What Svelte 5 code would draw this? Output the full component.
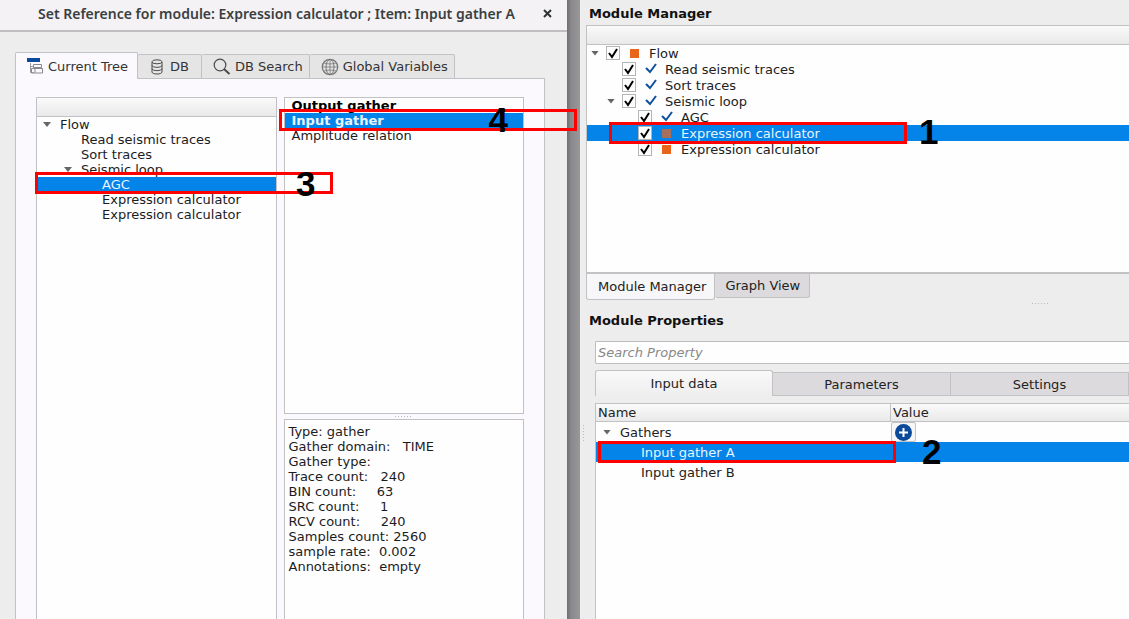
<script>
  let sourceTree = [
    { name: 'Flow', depth: 0, open: true },
    { name: 'Read seismic traces', depth: 1 },
    { name: 'Sort traces', depth: 1 },
    { name: 'Seismic loop', depth: 1, open: true },
    { name: 'AGC', depth: 2, step: '3' },
    { name: 'Expression calculator', depth: 2 },
    { name: 'Expression calculator', depth: 2 }
  ]
  let outputs = [
    { name: 'Output gather', bold: true },
    { name: 'Input gather', bold: true, step: '4' },
    { name: 'Amplitude relation' }
  ]
  let modules = [
    { name: 'Flow', depth: 0, open: true, on: true },
    { name: 'Read seismic traces', depth: 1, done: true, on: true },
    { name: 'Sort traces', depth: 1, done: true, on: true },
    { name: 'Seismic loop', depth: 1, done: true, open: true, on: true },
    { name: 'AGC', depth: 2, done: true, on: true },
    { name: 'Expression calculator', depth: 2, on: true, step: '1' },
    { name: 'Expression calculator', depth: 2, on: true }
  ]
  let details = [
    'Type: gather',
    'Gather domain:   TIME',
    'Gather type:',
    'Trace count:   240',
    'BIN count:     63',
    'SRC count:     1',
    'RCV count:     240',
    'Samples count: 2560',
    'sample rate:  0.002',
    'Annotations:  empty'
  ].join('\n')

  let pickedSource = 4
  let pickedOutput = 1
  let pickedModule = 5
  let search = ''
</script>

<main>
  <section class="dialog">
    <header class="title">
      <h1>Set Reference for module: Expression calculator ; Item: Input gather A</h1>
      <button class="close" aria-label="Close">
        <svg width="9" height="9" viewBox="0 0 9 9"><path d="M1 1 8 8M8 1 1 8" stroke="#2e3436" stroke-width="2" /></svg>
      </button>
    </header>

    <div class="dialog-body">
      <nav class="tabs">
        <button class="tab current">
          <svg width="18" height="18" viewBox="0 0 18 18" fill="none">
            <path d="M0 1h13v4H0z" fill="#0b4a9b" />
            <path d="M3.500 6v9.500h3M3.500 9.500h3" stroke="#999" />
            <path d="M6.500 7.500h8v3h-8zM4.500 11.500h11v4.500h-11zM8 11.500v4" stroke="#888" />
          </svg>
          Current Tree
        </button>
        <button class="tab db">
          <svg width="12" height="16" viewBox="0 0 12 16" fill="none" stroke="#4a4a4a">
            <ellipse cx="6" cy="2.800" rx="5" ry="2" />
            <path d="M1 3v10c0 2.700 10 2.700 10 0V3M1 6.300c0 2.700 10 2.700 10 0M1 9.600c0 2.700 10 2.700 10 0" />
          </svg>
          DB
        </button>
        <button class="tab">
          <svg width="18" height="18" viewBox="0 0 18 18" fill="none" stroke="#4a4a4a">
            <circle cx="7" cy="7" r="5.800" stroke-width="1.200" />
            <path d="m11 11 5.500 5" stroke-width="2" />
          </svg>
          DB Search
        </button>
        <button class="tab">
          <svg width="18" height="18" viewBox="0 0 18 18" fill="none" stroke="#777">
            <circle cx="9" cy="9" r="7.700" stroke-width="1.300" />
            <ellipse cx="9" cy="9" rx="4" ry="7.500" />
            <path d="M9 1.500v15M1.500 9h15M3 5c3 1.300 9 1.300 12 0M3 13c3-1.300 9-1.300 12 0" stroke-width=".8" />
          </svg>
          Global Variables
        </button>
      </nav>

      <div class="panel">
        <div class="source box">
          <div class="head"></div>
          <ul>
            {#each sourceTree as item, i}
              <li class:picked={i === pickedSource}>
                <button class="row depth{item.depth}" on:click={() => (pickedSource = i)}>
                  <span class="arrow" class:open={item.open}></span>
                  {item.name}
                </button>
                {#if item.step}
                  <span class="frame"></span><b class="step">{item.step}</b>
                {/if}
              </li>
            {/each}
          </ul>
        </div>

        <div class="side">
          <ul class="outputs box">
            {#each outputs as item, i}
              <li class:picked={i === pickedOutput}>
                <button class="row" class:bold={item.bold} on:click={() => (pickedOutput = i)}>{item.name}</button>
                {#if item.step}
                  <span class="frame"></span><b class="step">{item.step}</b>
                {/if}
              </li>
            {/each}
          </ul>
          <div class="grip"></div>
          <pre class="details box">{details}</pre>
        </div>
      </div>
    </div>
  </section>

  <div class="gutter"></div>

  <section class="workspace">
    <div class="grip vertical"></div>
    <div class="manager">
      <h2>Module Manager</h2>
      <div class="modules box">
        <div class="head"></div>
        <ul>
          {#each modules as item, i}
            <li class:picked={i === pickedModule}>
              <label class="row depth{item.depth}">
                <span class="arrow" class:open={item.open}></span>
                <span class="check">
                  <input type="checkbox" bind:checked={item.on} />
                  <svg width="14" height="14" viewBox="0 0 14 14"><path d="m3 7 3 4 5-8" fill="none" stroke="#000" stroke-width="2" /></svg>
                </span>
                <span class="state">
                  {#if item.done}
                    <svg width="12" height="12" viewBox="0 0 12 12"><path d="m1 5 4 4 6-8" fill="none" stroke="#0b4f9e" stroke-width="2" /></svg>
                  {:else}
                    <i></i>
                  {/if}
                </span>
                {item.name}
              </label>
              {#if item.step}
                <span class="frame"></span><b class="step">{item.step}</b>
              {/if}
            </li>
          {/each}
        </ul>
      </div>
      <nav class="bottom-tabs">
        <button class="current">Module Manager</button>
        <button>Graph View</button>
      </nav>
    </div>

    <div class="grip"></div>

    <div class="properties">
      <h2>Module Properties</h2>
      <input class="search" type="text" aria-label="Search Property" placeholder="Search Property" bind:value={search} />
      <nav class="wide-tabs">
        <button class="current">Input data</button>
        <button>Parameters</button>
        <button>Settings</button>
      </nav>
      <div class="values">
        <table>
          <thead>
            <tr><th>Name</th><th>Value</th></tr>
          </thead>
          <tbody>
            <tr>
              <td><div class="group"><span class="arrow open"></span>Gathers</div></td>
              <td>
                <button class="add" aria-label="Add gather">
                  <svg width="17" height="17" viewBox="0 0 17 17"><circle cx="8.500" cy="8.500" r="8.500" fill="#0b4a9b" /><path d="M8.500 4v9M4 8.500h9" stroke="#fff" stroke-width="2" /></svg>
                </button>
              </td>
            </tr>
            <tr class="picked">
              <td class="leaf">Input gather A<span class="frame"></span></td>
              <td><b class="step">2</b></td>
            </tr>
            <tr><td class="leaf">Input gather B</td><td></td></tr>
          </tbody>
        </table>
      </div>
    </div>
  </section>
</main>

<style>
  :global(body) {
    background: #ededed;
  }
  main {
    display: grid;
    grid-template-columns: minmax(0, 567fr) 13px minmax(0, 549fr);
    min-height: 100vh;
    overflow: hidden;
    font-family: 'DejaVu Sans', sans-serif;
    font-size: 13px;
    line-height: 15px;
    color: #1c1c1e;
    background: #ededed;
  }
  main * {
    box-sizing: border-box;
  }
  button,
  input {
    font: inherit;
    color: inherit;
    margin: 0;
  }
  ul {
    list-style: none;
    margin: 0;
    padding: 0;
  }
  h1,
  h2 {
    margin: 0;
  }
  .box {
    background: #fefefe;
    border: 1px solid #c2c1c3;
  }
  .head {
    height: 19px;
    background: linear-gradient(#fafafa, #e9e9e9);
    border-bottom: 1px solid #c2c1c3;
  }

  /* reference dialog */
  .dialog {
    display: flex;
    flex-direction: column;
    position: relative;
    z-index: 1;
  }
  .title {
    display: flex;
    align-items: center;
    height: 32px;
    padding: 0 15px 3px 38px;
    background: #f4f2f5;
    border-bottom: 2px solid #c0bfc0;
  }
  h1 {
    flex: 1;
    font-family: 'Noto Sans', sans-serif;
    font-size: 14px;
    font-weight: 600;
    line-height: 20px;
    white-space: nowrap;
    color: #3a3f42;
  }
  .close {
    display: flex;
    padding: 0;
    border: 0;
    background: none;
  }
  .dialog-body {
    flex: 1;
    display: flex;
    flex-direction: column;
    padding: 20px 22px 0 15px;
  }
  .tabs {
    display: flex;
    align-items: flex-end;
    height: 26px;
  }
  .tab {
    display: flex;
    align-items: center;
    gap: 4px;
    height: 24px;
    padding: 0 6px 0 11px;
    white-space: nowrap;
    color: #333;
    background: #e6e5e6;
    border: 1px solid #c2c1c3;
    border-left: 0;
    border-bottom: 0;
    border-radius: 2px 2px 0 0;
  }
  .tab.db {
    gap: 7px;
    padding: 0 12px 0 13px;
  }
  .tab.current {
    position: relative;
    height: 27px;
    margin-bottom: -1px;
    padding-right: 9px;
    gap: 3px;
    background: #fbf9fd;
    border-left: 1px solid #c2c1c3;
  }
  .panel {
    flex: 1;
    display: grid;
    grid-template-columns: 1fr 1fr;
    gap: 7px;
    padding: 18px 20px 0;
    background: #fbf9fd;
    border: 1px solid #c2c1c3;
    border-bottom: 0;
  }
  .source {
    border-bottom: 0;
  }
  .side {
    display: flex;
    flex-direction: column;
  }
  .outputs {
    flex: 0 0 317px;
  }
  .details {
    flex: 1;
    margin: 0;
    padding: 4px;
    font: inherit;
    border-bottom: 0;
  }

  /* rows shared by all the lists */
  li {
    position: relative;
  }
  .row {
    display: flex;
    align-items: center;
    width: 100%;
    height: 15px;
    padding: 0;
    border: 0;
    background: none;
    white-space: nowrap;
    text-align: left;
  }
  .outputs .row {
    padding-left: 7px;
  }
  .bold {
    font-weight: bold;
    color: #000;
  }
  .picked {
    background: #0483e8;
    color: #e9f4fd;
  }
  .picked .bold {
    color: #e9f4fd;
  }
  .arrow {
    width: 8px;
    height: 5px;
    flex: none;
  }
  .arrow.open {
    background: #666;
    clip-path: polygon(0 0, 100% 0, 50% 100%);
  }
  .source .row {
    gap: 9px;
    padding-left: 6px;
  }
  .source .depth1 {
    padding-left: 27px;
  }
  .source .depth2 {
    padding-left: 48px;
  }

  /* numbered steps over the windows */
  .frame {
    position: absolute;
    z-index: 2;
    left: -2px;
    top: -5px;
    width: 298px;
    height: 22px;
    border: 3px solid #f00;
    pointer-events: none;
  }
  .step {
    position: absolute;
    z-index: 3;
    left: 259px;
    top: -10px;
    font-family: 'Liberation Sans', Arial, sans-serif;
    font-size: 35px;
    font-weight: 700;
    line-height: 34px;
    color: #000;
    pointer-events: none;
  }
  .outputs .frame {
    left: -6px;
    top: -4px;
  }
  .outputs .step {
    left: 204px;
  }
  .modules .frame {
    left: 22px;
    top: -3px;
  }
  .modules .step {
    left: 332px;
  }

  .grip {
    height: 5px;
    width: 17px;
    margin: 0 auto;
    background: repeating-linear-gradient(90deg, #bbb 0 1px, transparent 1px 3px) center / 100% 1px no-repeat;
  }
  .gutter {
    background: linear-gradient(90deg, #6f6d70, #8a888b 30%, #989799);
  }

  /* module windows */
  .workspace {
    position: relative;
    display: flex;
    flex-direction: column;
    color: #222;
  }
  .grip.vertical {
    position: absolute;
    left: 3px;
    top: 425px;
    width: 1px;
    height: 17px;
    background: repeating-linear-gradient(#bbb 0 1px, transparent 1px 3px);
  }
  .workspace > .grip:not(.vertical) {
    margin: 1px 80px 0 auto;
  }
  .manager {
    padding: 5px 0 0 6px;
  }
  h2 {
    padding-left: 3px;
    font-size: 13px;
    line-height: 17px;
    color: #111;
  }
  .modules {
    height: 249px;
    margin-top: 3px;
    border-right: 0;
    border-bottom-width: 2px;
  }
  .modules .row {
    height: 16px;
    padding-left: 4px;
  }
  .modules .depth1 {
    padding-left: 20px;
  }
  .modules .depth2 {
    padding-left: 36px;
  }
  .check {
    position: relative;
    width: 14px;
    height: 14px;
    margin: 0 8px 0 7px;
  }
  .check input {
    display: block;
    appearance: none;
    width: 14px;
    height: 14px;
    background: #fefefe;
    border: 1px solid #b5b4b6;
  }
  .check svg {
    position: absolute;
    inset: 0;
    pointer-events: none;
  }
  .check input:not(:checked) + svg {
    display: none;
  }
  .state {
    display: flex;
    align-items: center;
    justify-content: center;
    width: 14px;
    margin-right: 7px;
  }
  .state i {
    width: 9px;
    height: 9px;
    margin-right: 1px;
    background: #ea651c;
  }
  .picked .state i {
    background: #a8705c;
  }

  .bottom-tabs {
    display: flex;
    align-items: flex-start;
  }
  .bottom-tabs button {
    height: 24px;
    padding: 0 9px 0 10px;
    background: #dcdadd;
    border: 1px solid #c2c1c3;
    border-top: 0;
    border-left: 0;
    border-radius: 0 0 3px 3px;
  }
  .bottom-tabs .current {
    height: 26px;
    padding: 0 8px 0 11px;
    background: #f7f6f8;
    border-left: 1px solid #c2c1c3;
  }

  .properties {
    flex: 1;
    display: flex;
    flex-direction: column;
    padding: 6px 0 0 6px;
  }
  .search {
    height: 23px;
    margin: 12px 0 0 9px;
    padding: 0 2px;
    background: #fefefe;
    border: 1px solid #bdbcbe;
    border-right: 0;
    border-radius: 2px 0 0 2px;
    outline: 0;
  }
  .search::placeholder {
    color: #888;
    font-style: italic;
    opacity: 1;
  }
  .wide-tabs {
    display: grid;
    grid-template-columns: repeat(3, 1fr);
    align-items: end;
    margin: 6px 0 7px 9px;
  }
  .wide-tabs button {
    height: 24px;
    padding: 0;
    background: #dcdadd;
    border: 1px solid #c2c1c3;
    border-left: 0;
  }
  .wide-tabs .current {
    height: 26px;
    background: linear-gradient(#f9f9f9, #eee);
    border-left: 1px solid #c2c1c3;
    border-bottom: 0;
    border-radius: 3px 3px 0 0;
  }
  .values {
    flex: 1;
    margin-left: 9px;
    background: #fefefe;
    border: 1px solid #c2c1c3;
    border-width: 1px 0 0 1px;
  }
  table {
    width: 100%;
    table-layout: fixed;
    border-collapse: separate;
    border-spacing: 0;
  }
  th {
    height: 18px;
    padding: 0 2px;
    text-align: left;
    font-weight: normal;
    background: linear-gradient(#fafafa, #e9e9e9);
    border-bottom: 1px solid #c2c1c3;
  }
  th:first-child {
    width: 295px;
    border-right: 1px solid #c2c1c3;
  }
  td {
    position: relative;
    height: 20px;
    padding: 0;
  }
  td.leaf {
    padding-left: 45px;
  }
  .group {
    display: flex;
    align-items: center;
    gap: 9px;
    padding-left: 7px;
  }
  .add {
    display: flex;
    align-items: center;
    justify-content: center;
    width: 25px;
    height: 20px;
    padding: 0;
    background: #f7f7f7;
    border: 1px solid #c2c1c3;
    border-radius: 2px;
  }
  .values .frame {
    left: 2px;
    top: -1px;
  }
  .values .step {
    left: 31px;
    top: -7px;
  }
</style>
